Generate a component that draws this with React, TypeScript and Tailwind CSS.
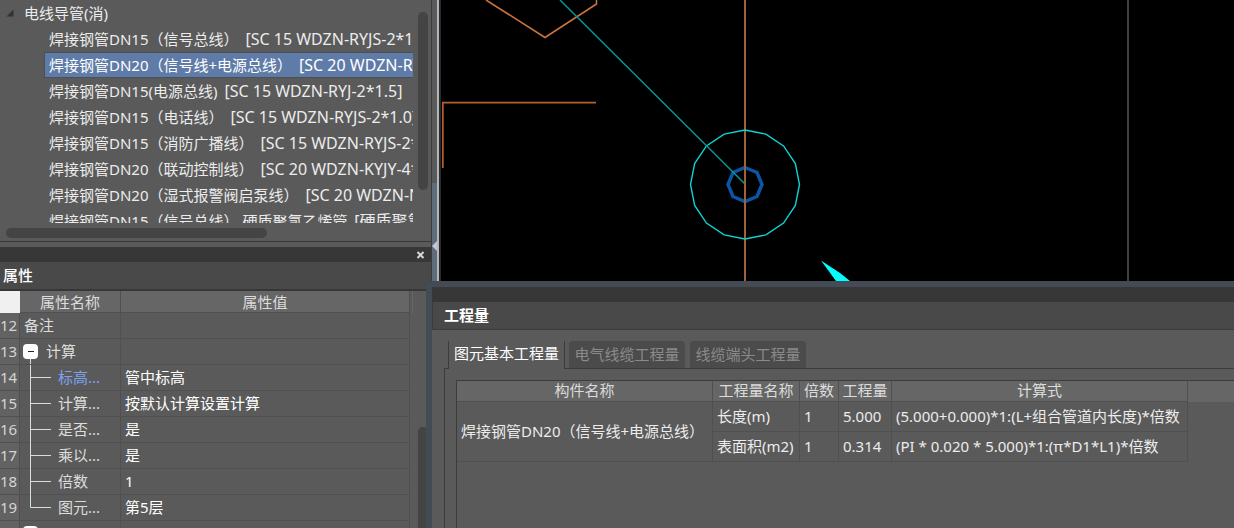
const FONT = "font-['Noto_Sans','Noto_Sans_CJK_SC',sans-serif]";

const CONDUITS = [
  { name: "焊接钢管DN15（信号总线）", spec: "[SC 15 WDZN-RYJS-2*1.5]" },
  { name: "焊接钢管DN20（信号线+电源总线）", spec: "[SC 20 WDZN-RYJS-2*1.5]" },
  { name: "焊接钢管DN15(电源总线)", spec: "[SC 15 WDZN-RYJ-2*1.5]" },
  { name: "焊接钢管DN15（电话线）", spec: "[SC 15 WDZN-RYJS-2*1.0]" },
  { name: "焊接钢管DN15（消防广播线）", spec: "[SC 15 WDZN-RYJS-2*1.5]" },
  { name: "焊接钢管DN20（联动控制线）", spec: "[SC 20 WDZN-KYJY-4*1.5]" },
  { name: "焊接钢管DN20（湿式报警阀启泵线）", spec: "[SC 20 WDZN-NYJY-4*1.5]" },
  { name: "焊接钢管DN15（信号总线） 硬质聚氯乙烯管", spec: "[硬质聚氯乙烯管]" },
];

interface Property {
  id: number;
  name: string;
  value: string;
  kind: "plain" | "group" | "child" | "last";
  link?: boolean;
}

const PROPERTIES: Property[] = [
  { id: 12, name: "备注", value: "", kind: "plain" },
  { id: 13, name: "计算", value: "", kind: "group" },
  { id: 14, name: "标高...", value: "管中标高", kind: "child", link: true },
  { id: 15, name: "计算...", value: "按默认计算设置计算", kind: "child" },
  { id: 16, name: "是否...", value: "是", kind: "child" },
  { id: 17, name: "乘以...", value: "是", kind: "child" },
  { id: 18, name: "倍数", value: "1", kind: "child" },
  { id: 19, name: "图元...", value: "第5层", kind: "last" },
  { id: 20, name: "", value: "", kind: "group" },
];

const QUANTITIES = [
  {
    name: "长度(m)",
    times: "1",
    amount: "5.000",
    formula: "(5.000+0.000)*1:(L+组合管道内长度)*倍数",
  },
  {
    name: "表面积(m2)",
    times: "1",
    amount: "0.314",
    formula: "(PI * 0.020 * 5.000)*1:(π*D1*L1)*倍数",
  },
];

const polygonPoints = (cx: number, cy: number, r: number, sides: number) =>
  Array.from({ length: sides }, (_, i) => {
    const a = (i * 2 * Math.PI) / sides;
    return `${cx + r * Math.sin(a)},${cy - r * Math.cos(a)}`;
  }).join(" ");

const ComponentTree = () => (
  <section className="h-[242px] shrink-0 border-b border-[#383838] bg-[#5a5a5a]">
    <div className="flex h-[223px]">
      <ul className="min-w-0 flex-1 overflow-hidden whitespace-nowrap">
        <li>
          <div className="flex h-[26px] items-center pl-1.5">
            <svg width="8" height="8" viewBox="0 0 8 8" className="mr-2.5">
              <path d="M7.5 0.5V7.5H0.5Z" fill="#333" />
            </svg>
            电线导管(消)
          </div>
          <ul className="pl-11">
            {CONDUITS.map(({ name, spec }, i) => (
              <li key={name}>
                <button
                  type="button"
                  className={
                    i === 1
                      ? "block h-[26px] w-full overflow-hidden border-y border-l border-[#4a4f58] bg-[#5f7ba8] pl-1 text-left leading-6 text-white"
                      : "block h-[26px] w-full overflow-hidden pl-[5px] text-left leading-[26px]"
                  }
                >
                  {name} <span className="ml-[3px] text-[16px]">{spec}</span>
                </button>
              </li>
            ))}
          </ul>
        </li>
      </ul>
      <div className="w-[18px] shrink-0 pl-[5px] pt-3">
        <div className="h-[178px] w-2.5 rounded-full bg-[#444]" />
      </div>
    </div>
    <div className="pl-1.5 pt-[5px]">
      <div className="h-2.5 w-[261px] rounded-full bg-[#444]" />
    </div>
  </section>
);

const PropertyName = ({ row }: { row: Property }) => {
  if (row.kind === "plain") return <span className="pl-1">{row.name}</span>;

  if (row.kind === "group") {
    return (
      <div className="flex h-[25px] items-start pl-[3px]">
        <div className="flex h-full w-[15px] flex-col items-center pt-[5px]">
          <button
            type="button"
            aria-label="折叠"
            className="flex h-[15px] w-[15px] shrink-0 items-center justify-center rounded-sm bg-white"
          >
            <span className="h-px w-1.5 bg-[#222]" />
          </button>
          <span className="w-px flex-1 bg-[#dcdcdc]" />
        </div>
        <span className="pl-2 leading-[25px]">{row.name}</span>
      </div>
    );
  }

  return (
    <div className="flex h-[25px] items-center">
      <svg width="32" height="26" className="shrink-0" stroke="#dcdcdc">
        <path
          d={row.kind === "last" ? "M10.5 0V12.5H31" : "M10.5 0V26M10.5 12.5H31"}
          fill="none"
        />
      </svg>
      <span className={row.link ? "pl-1.5 text-[#7ba3ee]" : "pl-1.5"}>
        {row.name}
      </span>
    </div>
  );
};

const PropertyPanel = () => (
  <section className="flex min-h-0 flex-1 flex-col">
    <div className="flex h-[15px] shrink-0 items-center justify-end bg-[#373737] pr-1.5">
      <button type="button" aria-label="关闭">
        <svg width="9" height="8" viewBox="0 0 9 8" stroke="#d8d8d8">
          <path d="M1.5 1L7.5 7M7.5 1L1.5 7" strokeWidth="2" />
        </svg>
      </button>
    </div>
    <h2 className="h-[29px] shrink-0 border-b-2 border-[#373737] bg-[#494949] pl-[3px] font-medium leading-[27px] text-white">
      属性
    </h2>
    <div className="flex min-h-0 flex-1 overflow-hidden">
      <table className="w-[410px] shrink-0 table-fixed border-separate border-spacing-0 self-start">
        <colgroup>
          <col className="w-5" />
          <col className="w-[101px]" />
          <col />
        </colgroup>
        <thead>
          <tr className="h-[22px] bg-[#666] leading-5 text-[#dcdcdc]">
            <th className="bg-[#f0f0f0]" />
            <th className="border-b border-r border-[#505050] p-0 font-normal">
              属性名称
            </th>
            <th className="border-b border-r border-[#505050] p-0 font-normal">
              属性值
            </th>
          </tr>
        </thead>
        <tbody>
          {PROPERTIES.map((row) => (
            <tr key={row.id} className="h-[26px] leading-[25px]">
              <td className="border-b border-r border-[#505050] bg-[#626262] p-0 text-[#d4d4d4]">
                {row.id}
              </td>
              <td className="whitespace-nowrap border-b border-r border-[#505050] p-0 text-[#dcdcdc]">
                <PropertyName row={row} />
              </td>
              <td className="border-b border-r border-[#505050] p-0 pl-1 text-white">
                {row.value}
              </td>
            </tr>
          ))}
        </tbody>
      </table>
      <div className="flex-1">
        <div className="h-[22px] w-[3px] border-r border-[#666]" />
        <div className="ml-2 mt-[114px] h-full w-2.5 rounded-t-full bg-[#444]" />
      </div>
    </div>
  </section>
);

const Drawing = () => (
  <div className="h-[281px] shrink-0 overflow-hidden border-l-2 border-[#2a2a2a] bg-black">
    <svg width="100%" height="100%" fill="none" aria-label="平面图">
      <g transform="translate(-441 0)">
        <path
          d="M486 0L545 37.5L596.5 4V0"
          stroke="#d0743c"
          strokeWidth="1.5"
        />
        <path d="M596 102.7H442.8V168" stroke="#b8602c" strokeWidth="1.7" />
        <polygon
          points={polygonPoints(745, 184.5, 17, 8)}
          stroke="#0b55a5"
          strokeWidth="3.5"
        />
        <path d="M745 0V281" stroke="#a0623c" strokeWidth="2" />
        <path d="M1128 0V281" stroke="#808080" />
        <polygon
          points={polygonPoints(745, 184.5, 54.5, 16)}
          stroke="#0cd4d4"
          strokeWidth="1.4"
        />
        <path d="M560 0L745 184" stroke="#0a9494" strokeWidth="1.5" />
        <path d="M821 260.5L840 273L850 281H836Z" fill="#0ff" />
      </g>
    </svg>
  </div>
);

const INACTIVE_TABS = ["电气线缆工程量", "线缆端头工程量"];

const QuantityTable = () => (
  <table className="w-full table-fixed border-separate border-spacing-0 whitespace-nowrap">
    <colgroup>
      <col className="w-[256px]" />
      <col className="w-[87px]" />
      <col className="w-[39px]" />
      <col className="w-[53px]" />
      <col className="w-[296px]" />
      <col />
    </colgroup>
    <thead>
      <tr className="h-[21px] bg-[#666] leading-[18px] text-[#dcdcdc]">
        {["构件名称", "工程量名称", "倍数", "工程量", "计算式"].map((title) => (
          <th
            key={title}
            className="border-b border-r border-[#505050] p-0 pb-0.5 font-normal"
          >
            {title}
          </th>
        ))}
        <th className="p-0" />
      </tr>
    </thead>
    <tbody>
      {QUANTITIES.map((q, i) => (
        <tr key={q.name} className="h-[30px] leading-[26px] text-[#ececec]">
          {i === 0 && (
            <td
              rowSpan={QUANTITIES.length}
              className="border-b border-r border-[#505050] p-0 pb-0.5 pl-1"
            >
              焊接钢管DN20（信号线+电源总线）
            </td>
          )}
          <td className="border-b border-r border-[#505050] p-0 pb-0.5 pl-1">
            {q.name}
          </td>
          <td className="border-b border-r border-[#505050] p-0 pb-0.5 pl-1">
            {q.times}
          </td>
          <td className="border-b border-r border-[#505050] p-0 pb-0.5 pl-1">
            {q.amount}
          </td>
          <td className="border-b border-r border-[#505050] p-0 pb-0.5 pl-1">
            {q.formula}
          </td>
          <td className="p-0" />
        </tr>
      ))}
    </tbody>
  </table>
);

const QuantityPanel = () => (
  <section className="relative z-10 -ml-[13px] flex min-h-0 flex-1 flex-col border-l-[6px] border-t-[6px] border-[#444b54] bg-[#5a5a5a]">
    <div className="h-[15px] shrink-0 bg-[#373737]" />
    <h2 className="h-7 shrink-0 border-b border-l border-[#3c3c3c] bg-[#494949] pl-[11px] font-bold leading-[26px] text-white">
      工程量
    </h2>
    <div className="flex min-h-0 flex-1 flex-col pl-3 pt-[11px]">
      <div role="tablist" className="flex h-7 shrink-0">
        <span className="w-1 border-b border-[#3c3c3c]" />
        <button
          type="button"
          role="tab"
          aria-selected="true"
          className="w-[117px] whitespace-nowrap border-x border-[#3c3c3c] pb-1 text-white"
        >
          图元基本工程量
        </button>
        <div className="flex flex-1 gap-[5px] border-b border-[#3c3c3c] pl-1">
          {INACTIVE_TABS.map((tab) => (
            <button
              key={tab}
              type="button"
              role="tab"
              aria-selected="false"
              className="w-[116px] whitespace-nowrap rounded-t-sm bg-[#4b4b4b] text-[#8a8a8a]"
            >
              {tab}
            </button>
          ))}
        </div>
      </div>
      <div className="min-h-0 flex-1 border-l border-[#3c3c3c] pl-[11px] pt-[11px]">
        <div className="h-full border-l border-t border-[#3c3c3c]">
          <QuantityTable />
        </div>
      </div>
    </div>
  </section>
);

export default function App() {
  return (
    <main
      className={`flex h-screen overflow-hidden bg-[#5a5a5a] text-[15px] text-[#ececec] ${FONT}`}
    >
      <aside className="flex w-[432px] shrink-0 flex-col gap-[5px] border-r border-[#3c3c3c]">
        <ComponentTree />
        <PropertyPanel />
      </aside>
      <div className="flex w-[7px] shrink-0 flex-col border-r-2 border-[#b4b8be]">
        <div className="h-[183px] shrink-0" />
        <div className="flex-1 bg-[#5f6c7a] pt-[58px]">
          <svg width="5" height="10" viewBox="0 0 5 10">
            <path d="M5 0V10L0 5Z" fill="#c4c8cc" />
          </svg>
        </div>
      </div>
      <div className="flex min-w-0 flex-1 flex-col">
        <Drawing />
        <QuantityPanel />
      </div>
    </main>
  );
}
